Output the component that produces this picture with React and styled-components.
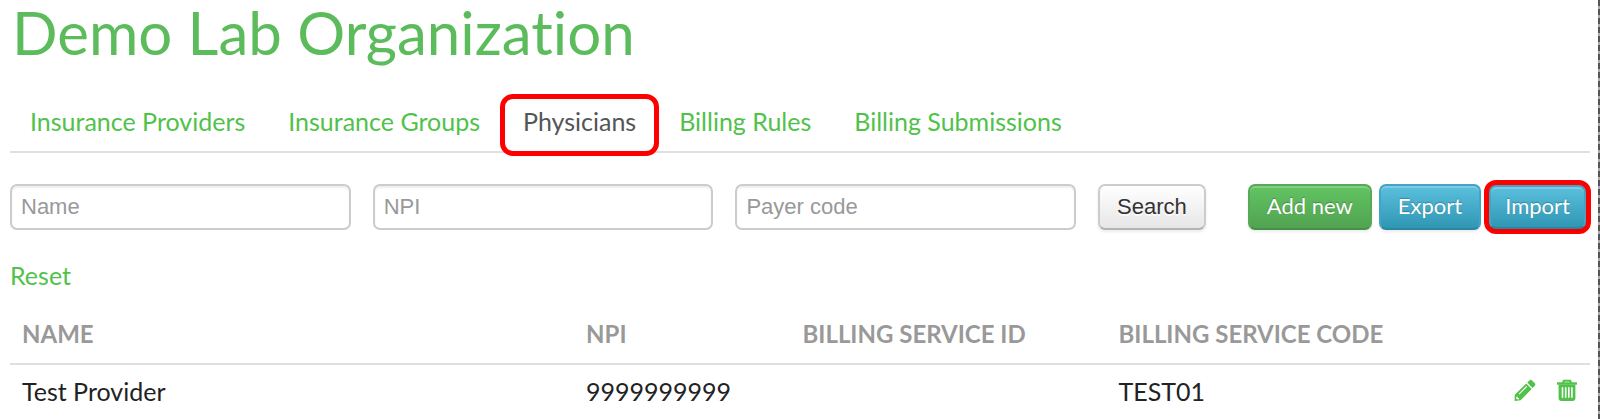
import React from 'react'
import styled, { createGlobalStyle, css } from 'styled-components'

const GlobalStyle = createGlobalStyle`
  *, *::before, *::after {
    box-sizing: border-box;
  }
  body {
    margin: 0;
    background: #fff;
    color: #222;
    font-family: Lato, 'Liberation Sans', sans-serif;
    font-size: 25px;
    line-height: 32px;
  }
`

const Page = styled.main`
  position: relative;
  min-height: 100vh;
  padding: 0 10px;
`

const PageEdge = styled.div`
  position: absolute;
  top: 0;
  right: 0;
  bottom: 0;
  width: 2px;
  background: repeating-linear-gradient(to bottom, #555 0 6px, #aaa 6px 9px);
`

const Title = styled.h1`
  margin: 0;
  padding: 0 2px;
  color: #5cbc5c;
  font-size: 60px;
  font-variant-ligatures: none;
  font-weight: 400;
  line-height: 64px;
`

const Tabs = styled.nav`
  display: flex;
  align-items: flex-start;
  gap: 3px;
  margin-top: 30px;
  height: 59px;
  border-bottom: 2px solid #e0e0e0;
`

const Tab = styled.a`
  padding: 11px 20px;
  color: #50c24a;
  text-decoration: none;

  ${({ $active }) =>
    $active &&
    css`
      z-index: 1;
      margin: 0 -3px;
      padding: 6px 18px 14px;
      border: 5px solid #f00;
      border-radius: 13px;
      background: #fff;
      color: #555;
    `}
`

const Toolbar = styled.form`
  display: flex;
  align-items: center;
  gap: 22px;
  margin-top: 27px;
  height: 54px;
`

const TextField = styled.input`
  flex: 1;
  min-width: 0;
  height: 46px;
  padding: 0 9px;
  border: 2px solid #ccc;
  border-radius: 7px;
  background: #fff;
  box-shadow: inset 0 2px 2px rgba(0, 0, 0, 0.07);
  color: #555;
  font: 22px 'Liberation Sans', Arial, sans-serif;

  &::placeholder {
    color: #999;
    opacity: 1;
  }
`

const tones = {
  plain: css`
    border-color: #ccc #ccc #b3b3b3;
    background: linear-gradient(#fff, #e6e6e6);
    color: #333;
    text-shadow: 0 2px 1px rgba(255, 255, 255, 0.75);
  `,
  success: css`
    border-color: #57a957 #57a957 #479147;
    background: linear-gradient(#62c462, #51a351);
  `,
  info: css`
    border-color: #44a5c2 #44a5c2 #2b86a2;
    background: linear-gradient(#5bc0de, #2f96b4);
  `,
}

const Button = styled.button`
  height: 46px;
  padding: 0 17px;
  border: 2px solid;
  border-radius: 7px;
  box-shadow: inset 0 2px 0 rgba(255, 255, 255, 0.2), 0 2px 3px rgba(0, 0, 0, 0.08);
  color: #fff;
  font: 22px 'Liberation Sans', Arial, sans-serif;
  text-shadow: 0 -1px 1px rgba(0, 0, 0, 0.25);
  white-space: nowrap;
  ${({ $tone }) => tones[$tone]}
`

const Actions = styled.div`
  display: flex;
  align-items: center;
  gap: 7px;
  margin-left: 20px;
  margin-right: -1px;

  ${Button} {
    padding-bottom: 4px;
    font-family: Lato, 'Liberation Sans', sans-serif;
  }
`

const Highlight = styled.span`
  display: flex;
  margin-left: -4px;
  border: 5px solid #f00;
  border-radius: 12px;
  background: #f00;

  ${Button} {
    height: 44px;
    padding-right: 14px;
    padding-left: 14px;
  }
`

const ResetLink = styled.a`
  display: inline-block;
  margin-top: 25px;
  color: #50c24a;
  text-decoration: none;
`

const Table = styled.table`
  width: 100%;
  margin-top: 14px;
  border-collapse: collapse;
  table-layout: fixed;
`

const HeadCell = styled.th`
  width: ${({ $width }) => $width};
  padding: 13px 12px;
  color: #999;
  font-size: 24px;
  font-weight: 700;
  text-align: left;
  text-transform: uppercase;
`

const Cell = styled.td`
  padding: 10px 12px;
  border-top: 2px solid #e0e0e0;
`

const RowActions = styled.div`
  display: flex;
  justify-content: flex-end;
  gap: 20px;
`

const IconButton = styled.button`
  display: flex;
  padding: 0;
  border: 0;
  background: none;
  color: #50c24a;

  svg {
    width: 22px;
    height: 24px;
  }
`

const PencilIcon = () => (
  <svg viewBox="0 0 22 24" fill="currentColor" aria-hidden="true">
    <path d="M15.4 1.4q1.3-1.2 2.6 0l2.8 2.8q1.2 1.3 0 2.6L18.6 9l-5.4-5.4z" />
    <path
      fillRule="evenodd"
      d="M12.3 4.5l5.4 5.4L6.6 21.2l-6 .9.2-6.3zM12.4 6.9L4.6 14.7l.8.8 7.8-7.8zM2.4 17.8l-.2 1.6 1.2 1.2 1.7-.3v-1.3H3.8v-1.3z"
    />
  </svg>
)

const TrashIcon = () => (
  <svg viewBox="0 0 22 24" fill="none" stroke="currentColor" aria-hidden="true">
    <path d="M1 4.5h20" strokeWidth="2.4" />
    <path d="M6.8 4.2l1-2.4h6.4l1 2.4" strokeWidth="2" />
    <path
      d="M2.6 5.5h16.8v14.1q0 2.4-2.4 2.4H5q-2.4 0-2.4-2.4zM5.7 8.2v10.6h1.6V8.2zM8.9 8.2v10.6h1.6V8.2zM12 8.2v10.6h1.6V8.2zM15.1 8.2v10.6h1.6V8.2z"
      fill="currentColor"
      fillRule="evenodd"
      stroke="none"
    />
  </svg>
)

const tabs = [
  'Insurance Providers',
  'Insurance Groups',
  'Physicians',
  'Billing Rules',
  'Billing Submissions',
]

const fields = ['Name', 'NPI', 'Payer code']

const columns = [
  { label: 'Name', width: '35.7%' },
  { label: 'NPI', width: '13.7%' },
  { label: 'Billing Service ID', width: '20%' },
  { label: 'Billing Service Code', width: '21%' },
]

const physicians = [
  { name: 'Test Provider', npi: '9999999999', serviceId: '', serviceCode: 'TEST01' },
]

const App = () => {
  return (
    <Page>
      <GlobalStyle />
      <Title>Demo Lab Organization</Title>
      <Tabs>
        {tabs.map((tab) => (
          <Tab
            key={tab}
            href="#"
            $active={tab === 'Physicians'}
            aria-current={tab === 'Physicians' ? 'page' : undefined}
          >
            {tab}
          </Tab>
        ))}
      </Tabs>
      <Toolbar onSubmit={(e) => e.preventDefault()}>
        {fields.map((field) => (
          <TextField key={field} type="text" placeholder={field} aria-label={field} />
        ))}
        <Button type="submit" $tone="plain">Search</Button>
        <Actions>
          <Button type="button" $tone="success">Add new</Button>
          <Button type="button" $tone="info">Export</Button>
          <Highlight>
            <Button type="button" $tone="info">Import</Button>
          </Highlight>
        </Actions>
      </Toolbar>
      <ResetLink href="#">Reset</ResetLink>
      <Table>
        <thead>
          <tr>
            {columns.map(({ label, width }) => (
              <HeadCell key={label} $width={width} scope="col">{label}</HeadCell>
            ))}
            <HeadCell as="td" />
          </tr>
        </thead>
        <tbody>
          {physicians.map((row) => (
            <tr key={row.npi}>
              <Cell>{row.name}</Cell>
              <Cell>{row.npi}</Cell>
              <Cell>{row.serviceId}</Cell>
              <Cell>{row.serviceCode}</Cell>
              <Cell>
                <RowActions>
                  <IconButton type="button" aria-label="Edit"><PencilIcon /></IconButton>
                  <IconButton type="button" aria-label="Delete"><TrashIcon /></IconButton>
                </RowActions>
              </Cell>
            </tr>
          ))}
        </tbody>
      </Table>
      <PageEdge />
    </Page>
  )
}

export default App
